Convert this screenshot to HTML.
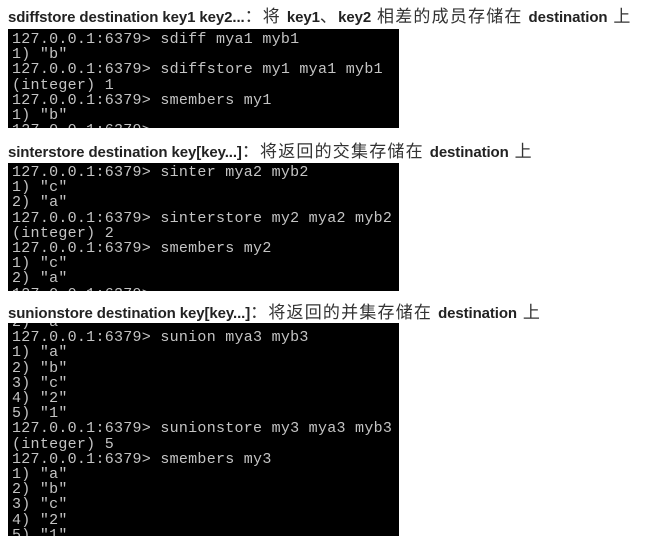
<!DOCTYPE html>
<html><head><meta charset="utf-8"><style>
body{margin:0;width:653px;height:548px;background:#fff;position:relative;overflow:hidden}
.h{position:absolute;left:8px;font-family:"Liberation Sans","Noto Sans CJK SC",sans-serif;font-size:15px;color:#222;white-space:nowrap;letter-spacing:-0.1px}
.h b{font-weight:bold}
.h span{color:#333;font-weight:normal;font-size:17px;letter-spacing:1.2px}
.t{position:absolute;left:8px;width:391px;background:#000;overflow:hidden}
.t pre{margin:0;position:absolute;left:4px;font-family:"Liberation Mono",monospace;font-size:15px;letter-spacing:0.27px;line-height:15.2px;color:#c4c4c4}
</style></head><body>
<div class="h" style="top:2px"><b>sdiffstore destination key1 key2...</b><span>：将 </span><b>key1</b><span>、</span><b>key2</b><span> 相差的成员存储在 </span><b>destination</b><span> 上</span></div>
<div class="t" style="top:29px;height:99px"><pre style="top:3px">127.0.0.1:6379&gt; sdiff mya1 myb1
1) "b"
127.0.0.1:6379&gt; sdiffstore my1 mya1 myb1
(integer) 1
127.0.0.1:6379&gt; smembers my1
1) "b"
127.0.0.1:6379&gt;</pre></div>
<div class="h" style="top:137px"><b>sinterstore destination key[key...]</b><span>：将返回的交集存储在 </span><b>destination</b><span> 上</span></div>
<div class="t" style="top:163px;height:128px"><pre style="top:2px">127.0.0.1:6379&gt; sinter mya2 myb2
1) "c"
2) "a"
127.0.0.1:6379&gt; sinterstore my2 mya2 myb2
(integer) 2
127.0.0.1:6379&gt; smembers my2
1) "c"
2) "a"
127.0.0.1:6379&gt;</pre></div>
<div class="h" style="top:298px"><b>sunionstore destination key[key...]</b><span>：将返回的并集存储在 </span><b>destination</b><span> 上</span></div>
<div class="t" style="top:323px;height:213px"><pre style="top:-8px">2) "a"
127.0.0.1:6379&gt; sunion mya3 myb3
1) "a"
2) "b"
3) "c"
4) "2"
5) "1"
127.0.0.1:6379&gt; sunionstore my3 mya3 myb3
(integer) 5
127.0.0.1:6379&gt; smembers my3
1) "a"
2) "b"
3) "c"
4) "2"
5) "1"</pre></div>
</body></html>
